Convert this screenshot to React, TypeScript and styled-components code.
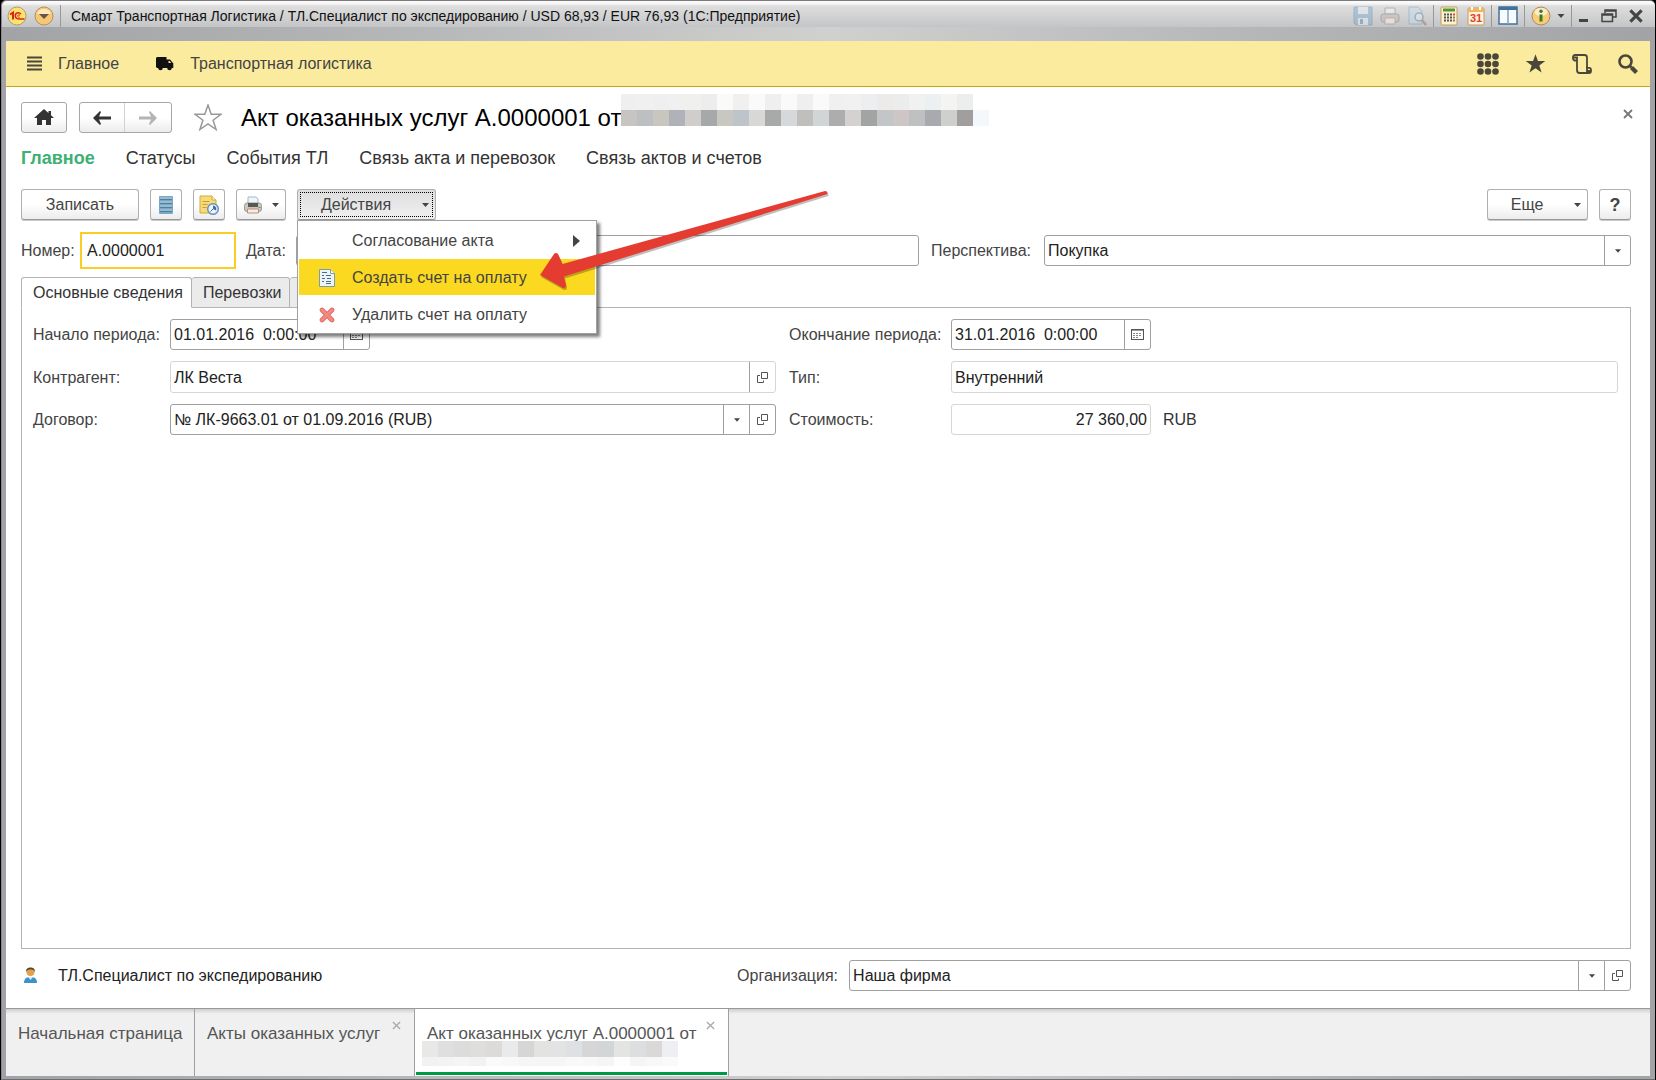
import React from "react";
import styled, { createGlobalStyle, css } from "styled-components";

const GlobalStyle = createGlobalStyle`
  *, *::before, *::after { box-sizing: border-box; }
  body {
    margin: 0;
    background: #000;
    font-family: "Liberation Sans", Arial, sans-serif;
    font-size: 16px;
    line-height: 20px;
    color: #444;
  }
  button, input, select { font: inherit; color: inherit; margin: 0; }
  svg { display: block; flex: none; }
`;

/* ---------- window frame ---------- */

const Frame = styled.div`
  min-height: 100vh;
  display: flex;
  flex-direction: column;
  margin: 0 1px;
  padding: 0 5px 3px 4px;
  border-top: 1px solid #7d797c;
  border-bottom: 1px solid #6e6e70;
  border-left: 1px solid #8a8a8e;
  border-radius: 5px 5px 0 0;
  background: linear-gradient(90deg, #a2a3a6, #b6b7b9 25%, #d0d0d0 50%, #b6b7b9 75%, #a2a3a6);
`;

const TitleBar = styled.header`
  display: flex;
  align-items: center;
  height: 26px;
  margin: 0 -5px 14px -4px;
  padding: 3px 12px 0 5px;
  border-radius: 5px 5px 0 0;
  background: linear-gradient(180deg, #fdfdfd 0, #f4f4f4 3px, #dedede 5px, #c4c5c7 100%);
`;

const Caption = styled.h1`
  flex: 1;
  min-width: 0;
  margin: 0;
  padding-left: 4px;
  overflow: hidden;
  white-space: nowrap;
  font-size: 14px;
  line-height: 20px;
  font-weight: 400;
  color: #111;
`;

const BarButton = styled.button<{ $dim?: boolean }>`
  display: flex;
  flex: none;
  padding: 0;
  border: 0;
  background: none;
  opacity: ${(p) => (p.$dim ? 0.4 : 1)};
`;

const BarGroup = styled.div<{ $gap: number }>`
  display: flex;
  align-items: center;
  gap: ${(p) => p.$gap}px;
`;

const BarSeparator = styled.span`
  width: 1px;
  height: 22px;
  margin: 0 6px;
  background: #98989a;
`;

/* ---------- section bar ---------- */

const SectionBar = styled.nav`
  display: flex;
  align-items: center;
  justify-content: space-between;
  height: 46px;
  padding: 0 12px 0 21px;
  border-bottom: 1px solid #bfa71c;
  background: #fbeb9e;
`;

const Sections = styled.div`
  display: flex;
  gap: 37px;
`;

const SectionLink = styled.a`
  display: flex;
  align-items: center;
  gap: 16px;
  color: #444;
  text-decoration: none;
`;

/* ---------- form page ---------- */

const Page = styled.main`
  flex: 1;
  display: flex;
  flex-direction: column;
  padding: 15px 19px 17px 15px;
  background: #fff;
`;

const HeadRow = styled.div`
  display: flex;
  align-items: center;
  height: 31px;
  margin-right: -2px;
`;

const buttonLook = css`
  border: 1px solid #b0b0b0;
  border-bottom-color: #989898;
  border-radius: 3px;
  background: linear-gradient(180deg, #fff 50%, #ececec);
  box-shadow: 0 1px 0 #c8c8c8;
`;

const NavGroup = styled.div<{ $before: number }>`
  display: flex;
  height: 31px;
  margin-left: ${(p) => p.$before}px;
  overflow: hidden;
  ${buttonLook}
  border-color: #a6a6a6;
  box-shadow: none;
`;

const NavButton = styled.button`
  display: flex;
  align-items: center;
  justify-content: center;
  width: 44px;
  padding: 0;
  border: 0;
  background: none;
  & + & { width: 47px; border-left: 1px solid #d2d2d2; }
`;

const StarButton = styled(BarButton)`
  margin: 0 19px 0 22px;
`;

const Title = styled.h2`
  margin: 0;
  white-space: nowrap;
  font-size: 24px;
  line-height: 29px;
  font-weight: 400;
  color: #000;
`;

const TitleMask = styled.svg`
  align-self: flex-start;
  margin: -8px auto 0 0;
`;

const CloseButton = styled(BarButton)`
  align-self: flex-start;
  padding: 7px 0 0;
`;

const FormLinks = styled.nav`
  display: flex;
  gap: 31px;
  height: 20px;
  margin-top: 15px;
`;

const FormLink = styled.a<{ $current?: boolean }>`
  font-size: 18px;
  line-height: 20px;
  text-decoration: none;
  font-weight: ${(p) => (p.$current ? 700 : 400)};
  color: ${(p) => (p.$current ? "#3db073" : "#333")};
`;

const Toolbar = styled.div`
  display: flex;
  gap: 11px;
  height: 31px;
  margin-top: 21px;
`;

const Spacer = styled.span`
  flex: 1;
`;

const ToolButton = styled.button<{ $width: number; $open?: boolean }>`
  display: flex;
  align-items: center;
  justify-content: center;
  width: ${(p) => p.$width}px;
  height: 31px;
  padding: 0 6px;
  color: #444;
  ${buttonLook}
  ${(p) =>
    p.$open &&
    css`
      background: linear-gradient(180deg, #dedede, #f0f0f0);
      outline: 1px dotted #000;
      outline-offset: -4px;
    `}
`;

const ToolLabel = styled.span`
  flex: 1;
  padding-right: 14px;
  text-align: center;
`;

const HelpMark = styled.span`
  font-size: 18px;
  font-weight: 700;
`;

/* ---------- actions menu ---------- */

const MenuAnchor = styled.div`
  position: relative;
`;

const Menu = styled.div`
  position: absolute;
  z-index: 2;
  top: 31px;
  left: 0;
  display: grid;
  gap: 1px;
  width: 300px;
  padding: 1px;
  border: 1px solid #a0a0a0;
  background: #fff;
  box-shadow: 3px 3px 3px rgba(0, 0, 0, 0.5);
`;

const MenuItem = styled.button<{ $active?: boolean }>`
  display: grid;
  grid-template-columns: 17px 1fr 8px;
  gap: 16px;
  align-items: center;
  height: 36px;
  padding: 2px 14px 0 20px;
  border: 0;
  text-align: left;
  color: #444;
  background: ${(p) => (p.$active ? "#fbd920" : "none")};
`;

const Pointer = styled.svg`
  position: absolute;
  z-index: 3;
  top: -3px;
  left: 238px;
  pointer-events: none;
`;

/* ---------- fields ---------- */

const FieldBox = styled.div<{ $quiet?: boolean; $tall?: boolean; $width?: number }>`
  display: flex;
  flex: ${(p) => (p.$width ? `0 0 ${p.$width}px` : "1")};
  min-width: 0;
  height: ${(p) => (p.$tall ? 32 : 31)}px;
  border: 1px solid ${(p) => (p.$quiet ? "#d6d6d6" : "#a0a0a0")};
  border-radius: 3px;
  background: #fff;
  color: #222;
`;

const Input = styled.input<{ $right?: boolean }>`
  flex: 1;
  width: 0;
  min-width: 0;
  padding: 1px 3px 0;
  border: 0;
  outline: 0;
  background: none;
  text-align: ${(p) => (p.$right ? "right" : "left")};
`;

const NumberInput = styled(Input)`
  flex: none;
  width: 156px;
  height: 37px;
  padding: 0 5px;
  border: 2px solid #fbcc24;
  color: #222;
`;

const PickerWrap = styled.div`
  flex: 1;
  min-width: 0;
  display: grid;
  grid-template-columns: 1fr 26px;
`;

const Select = styled.select`
  grid-area: 1 / 1 / 2 / 3;
  width: 100%;
  padding: 1px 30px 0 3px;
  border: 0;
  outline: 0;
  appearance: none;
  background: none;
`;

const SelectArrow = styled.span`
  grid-area: 1 / 2;
  display: flex;
  align-items: center;
  justify-content: center;
  border-left: 1px solid #a0a0a0;
  pointer-events: none;
`;

const FieldButton = styled.button`
  display: flex;
  align-items: center;
  justify-content: center;
  width: 26px;
  padding: 0;
  border: 0;
  border-left: 1px solid #a0a0a0;
  background: none;
`;

const NumberRow = styled.div`
  display: flex;
  align-items: center;
  height: 37px;
  margin-top: 12px;
`;

const Label = styled.label<{ $width: number }>`
  flex: none;
  width: ${(p) => p.$width}px;
  padding-top: 1px;
  white-space: nowrap;
`;

const Pair = styled.div<{ $grow: number; $before?: number }>`
  display: flex;
  align-items: center;
  flex: ${(p) => p.$grow} 1 0;
  margin-left: ${(p) => p.$before || 0}px;
`;

/* ---------- tabs ---------- */

const Tabs = styled.div`
  display: flex;
  margin-top: 8px;
`;

const Tab = styled.button<{ $current?: boolean }>`
  height: 31px;
  padding: 0 8px 0 11px;
  margin: 0 0 -1px;
  border: 1px solid #b4b4b4;
  border-left-width: ${(p) => (p.$current ? 1 : 0)}px;
  border-bottom-color: ${(p) => (p.$current ? "#fff" : "#b4b4b4")};
  border-radius: 3px 3px 0 0;
  background: ${(p) => (p.$current ? "#fff" : "#ebebeb")};
  color: #333;
  z-index: 1;
`;

const Panel = styled.section`
  flex: 1;
  display: grid;
  grid-template-columns: 743fr 829fr;
  align-content: start;
  gap: 11px 13px;
  padding: 11px 12px 11px 11px;
  border: 1px solid #b4b4b4;
`;

const Cell = styled.div`
  display: flex;
  align-items: center;
  min-width: 0;
`;

const Unit = styled.span`
  margin-left: 12px;
  padding-top: 1px;
  color: #333;
`;

const Footer = styled.footer`
  display: flex;
  align-items: center;
  margin-top: 11px;
`;

const User = styled.div`
  display: flex;
  align-items: center;
  gap: 20px;
  flex: 715 1 0;
  padding-left: 2px;
  color: #222;
`;

/* ---------- open windows bar ---------- */

const WindowBar = styled.nav`
  display: flex;
  height: 68px;
  border-top: 1px solid #989898;
  background: linear-gradient(180deg, #cfcfcf, #f0f0f0 5px);
`;

const WindowTab = styled.div<{ $current?: boolean; $width: number }>`
  display: flex;
  align-items: flex-start;
  justify-content: space-between;
  width: ${(p) => p.$width}px;
  padding: 15px 13px 0 12px;
  border-right: 1px solid #a0a0a0;
  ${(p) =>
    p.$current &&
    css`
      background: linear-gradient(#009a44, #009a44) 1px calc(100% - 1px) / calc(100% - 2px) 3px no-repeat #fff;
    `}
`;

const WindowLink = styled.a`
  white-space: nowrap;
  font-size: 17px;
  line-height: 20px;
  text-decoration: none;
  color: #555;
`;

const TabMask = styled.svg`
  margin: -3px 0 0 -5px;
`;

const TabClose = styled(BarButton)`
  margin-top: -3px;
`;

/* ---------- icons ---------- */

const Caret = ({ w = 7, h = 4 }: { w?: number; h?: number }) => (
  <svg width={w} height={h} viewBox="0 0 7 4" aria-hidden="true">
    <path d="M0 0h7L3.5 4z" fill="#444" />
  </svg>
);

const Cross = ({ size, color, stroke = 2 }: { size: number; color: string; stroke?: number }) => (
  <svg width={size} height={size} viewBox="0 0 10 10" aria-hidden="true">
    <path d="M1 1l8 8M9 1L1 9" stroke={color} strokeWidth={stroke} />
  </svg>
);

const OpenIcon = () => (
  <svg width="11" height="11" viewBox="0 0 11 11" fill="none" stroke="#555" aria-hidden="true">
    <path d="M4.5.5h6v6h-6zM3 3.500H.5v7h6V8.500" />
  </svg>
);

const CalendarIcon = () => (
  <svg width="13" height="11" viewBox="0 0 13 11" aria-hidden="true">
    <rect x=".5" y=".5" width="12" height="10" fill="#fff" stroke="#555" />
    <path d="M1 1.500h11" stroke="#999" />
    <path d="M2 4.500h9M2 6.500h9M2 8.500h6" stroke="#888" strokeDasharray="2 1" />
  </svg>
);

const HomeIcon = () => (
  <svg width="20" height="17" viewBox="0 0 20 17" aria-hidden="true">
    <path d="M10 0L0 9h3v7h5v-5h4v5h5V9h3l-3-2.700V2h-2.500v2z" fill="#333" />
  </svg>
);

const ArrowIcon = ({ color, flip }: { color: string; flip?: boolean }) => (
  <svg width="18" height="14" viewBox="0 0 18 14" aria-hidden="true">
    <path
      d="M0 7l7-7 1 1-2 4.500h12v3H6L8 13l-1 1z"
      fill={color}
      transform={flip ? "matrix(-1 0 0 1 18 0)" : undefined}
    />
  </svg>
);

const starPath = "M14 1l3.200 9.300H27l-7.900 5.900 3 9.300L14 19.800l-8.100 5.700 3-9.300L1 10.300h9.800z";

const ListIcon = () => (
  <svg width="14" height="20" viewBox="0 0 14 20" aria-hidden="true">
    <rect width="14" height="18" y="1" rx="1" fill="#7ba6c4" />
    <path d="M1 4.500h12M1 8.500h12M1 12.500h12M1 16.500h12" stroke="#4d7f9f" />
    <path d="M1 3h12M1 7h12M1 11h12M1 15h12" stroke="#b3d0e2" />
  </svg>
);

const JournalIcon = () => (
  <svg width="20" height="20" viewBox="0 0 20 20" aria-hidden="true">
    <path d="M1 1h12l4 4v13H1z" fill="#f7da79" stroke="#d3a93c" />
    <path d="M13 1v4h4" fill="#fff2bd" stroke="#d3a93c" />
    <path d="M3.500 6.500h7M3.500 9.500h5M3.500 12.500h4" stroke="#c69c3a" />
    <circle cx="14" cy="14" r="5.300" fill="#eef5fc" stroke="#6991bd" strokeWidth="1.500" />
    <path d="M14 14v-3.500a3.500 3.500 0 0 1 3 5z" fill="#3c6da8" />
    <path d="M14 14l-2.500 2.500" stroke="#3c6da8" />
  </svg>
);

const PrinterIcon = () => (
  <svg width="20" height="20" viewBox="0 0 20 20" aria-hidden="true">
    <path d="M5 2h8l2 2v6H5z" fill="#eef6fb" stroke="#9db8c9" />
    <rect x="1.500" y="8" width="17" height="8.500" rx="2.500" fill="#cdc7c2" stroke="#a09893" />
    <path d="M5 8h10v4H5z" fill="#5b5753" />
    <path d="M4.500 14h11v4h-11z" fill="#f7ebe4" stroke="#b9917d" />
    <path d="M15.500 12.500h2" stroke="#4c9b4c" />
  </svg>
);

const InvoiceIcon = () => (
  <svg width="16" height="18" viewBox="0 0 16 18" aria-hidden="true">
    <path d="M.5.5h11l4 4v13H.5z" fill="#edf4f8" stroke="#7d9bab" />
    <path d="M11.500.5v4h4" fill="#fff" stroke="#7d9bab" />
    <path d="M3 3.500h5M3 6.500h2M7 6.500h5M3 9.500h3M8 9.500h4M3 12.500h2M7 12.500h5M7 14.500h5" stroke="#456f8b" />
  </svg>
);

const DeleteIcon = () => (
  <svg width="16" height="16" viewBox="0 0 16 16" aria-hidden="true">
    <path d="M3 3l10 10M13 3L3 13" stroke="#e0675e" strokeWidth="4.600" strokeLinecap="round" />
    <path d="M3 3l10 10M13 3L3 13" stroke="#f28a80" strokeWidth="3" strokeLinecap="round" />
  </svg>
);

const UserIcon = () => (
  <svg width="15" height="17" viewBox="0 0 15 17" aria-hidden="true">
    <path d="M1 16c0-4 2-6 6.500-6s6.500 2 6.500 6z" fill="#3b93c9" />
    <path d="M5 10l2.500 3L10 10z" fill="#d8edf8" />
    <circle cx="7.500" cy="5" r="4" fill="#e5a04d" />
    <path d="M3 5C3 1.500 5 .5 7.500.5S12 1.500 12 5c-1-2-2.500-2.500-4.500-2.500S4 3 3 5z" fill="#5a4630" />
  </svg>
);

const LogoIcon = () => (
  <svg width="20" height="20" viewBox="0 0 20 20" aria-hidden="true">
    <circle cx="10" cy="10" r="9" fill="#fbe36c" stroke="#b39c72" />
    <path d="M3 8.500l3-2V13.500" fill="none" stroke="#d8261c" strokeWidth="2" />
    <path d="M14 8c-2.500-2.500-6-1-5.700 2s2.700 3 4.200 3H17.500" fill="none" stroke="#d8261c" strokeWidth="1.600" />
    <path d="M13 9.200c-1.600-.8-2.500 0-2.300 1s1.300 1.100 2 1.100" fill="none" stroke="#d8261c" />
  </svg>
);

const MenuRoundIcon = () => (
  <svg width="20" height="20" viewBox="0 0 20 20" aria-hidden="true">
    <circle cx="10" cy="10" r="9" fill="#f7c873" stroke="#b78f5d" />
    <path d="M3 8a7 5 0 0 1 14 0z" fill="#fde7bd" />
    <path d="M5 8h10l-5 5z" fill="#665544" />
  </svg>
);

const SaveIcon = () => (
  <svg width="20" height="20" viewBox="0 0 20 20" aria-hidden="true">
    <path d="M1 1h18v18H3l-2-2z" fill="#6fa3cb" stroke="#4a80a8" />
    <path d="M5 1h10v7H5zM5 12h10v7H5z" fill="#eef5fa" />
    <path d="M7 13h3v5H7z" fill="#4a80a8" />
  </svg>
);

const BarPrinterIcon = () => (
  <svg width="20" height="20" viewBox="0 0 20 20" aria-hidden="true">
    <path d="M5 2h10v6H5z" fill="#fff" stroke="#777" />
    <rect x="1" y="8" width="18" height="8" rx="2" fill="#bcb4ae" stroke="#776f6c" />
    <path d="M5 12h10v6H5z" fill="#fff" stroke="#c07858" />
  </svg>
);

const PreviewIcon = () => (
  <svg width="20" height="20" viewBox="0 0 20 20" aria-hidden="true">
    <path d="M2 1h9l4 4v13H2z" fill="#c4dcec" stroke="#6795b4" />
    <circle cx="12" cy="11" r="4" fill="#e6f2fa" stroke="#4a7898" strokeWidth="1.500" />
    <path d="M15 14l4 5" stroke="#a05a38" strokeWidth="2.500" />
  </svg>
);

const CalculatorIcon = () => (
  <svg width="18" height="20" viewBox="0 0 18 20" aria-hidden="true">
    <rect x="1" y="1" width="16" height="18" rx="1" fill="#fff1d0" stroke="#c39c5e" />
    <path d="M3 2.500h12v3H3z" fill="#4f9932" />
    <path d="M4 8.500h8M4 11.500h8M4 14.500h8" stroke="#555" strokeWidth="2" strokeDasharray="2 1" />
    <path d="M13 7.500h2v2h-2z" fill="#e24a30" />
    <path d="M13 10.500h2v2h-2zM13 13.500h2v2h-2z" fill="#8c7c5c" />
  </svg>
);

const DateIcon = () => (
  <svg width="18" height="20" viewBox="0 0 18 20" aria-hidden="true">
    <rect x="1" y="2" width="16" height="17" rx="1" fill="#fff3df" stroke="#c39c5e" />
    <path d="M1 2h16v4H1z" fill="#f0b562" />
    <path d="M5 1v3M13 1v3" stroke="#fff" strokeWidth="2" />
    <text x="9" y="16" textAnchor="middle" fontSize="11" fontWeight="700" fill="#e0402a">31</text>
  </svg>
);

const ColumnsIcon = () => (
  <svg width="20" height="20" viewBox="0 0 20 20" aria-hidden="true">
    <rect x="1" y="1" width="18" height="17" fill="#f8fbfd" stroke="#41729c" strokeWidth="1.500" />
    <path d="M1 2.500h18" stroke="#41729c" strokeWidth="3" />
    <path d="M10 4v14" stroke="#7fa2bf" strokeWidth="1.500" />
  </svg>
);

const InfoIcon = () => (
  <svg width="20" height="20" viewBox="0 0 20 20" aria-hidden="true">
    <circle cx="10" cy="10" r="9" fill="#f9cc7a" stroke="#a98b62" />
    <ellipse cx="10" cy="6" rx="6.500" ry="4" fill="#fdebca" />
    <path d="M10 8.500V15.500" fill="none" stroke="#367f1f" strokeWidth="3" />
    <circle cx="10" cy="5.300" r="1.700" fill="#367f1f" />
  </svg>
);

const RestoreIcon = () => (
  <svg width="16" height="14" viewBox="0 0 16 14" fill="none" stroke="#444" strokeWidth="1.500" aria-hidden="true">
    <path d="M4 4V1h11v7h-3M4 2h11" />
    <path d="M1 5h10.500v7.500H1zM1 6h10.500" />
  </svg>
);

const MinimizeIcon = () => (
  <svg width="11" height="14" viewBox="0 0 11 14" aria-hidden="true">
    <path d="M1 10h9v3H1z" fill="#444" />
  </svg>
);

const LinesIcon = () => (
  <svg width="15" height="15" viewBox="0 0 15 15" aria-hidden="true">
    <path d="M0 1.500h15M0 5.500h15M0 9.500h15M0 13.500h15" stroke="#4a463c" strokeWidth="2" />
  </svg>
);

const TruckIcon = () => (
  <svg width="18" height="14" viewBox="0 0 18 14" aria-hidden="true">
    <path d="M1 0h9.500v11H1L0 10V1z" fill="#111" />
    <path d="M10 2.500h4l2.500 3 .8 1V11H10z" fill="#111" />
    <path d="M12.500 4h1.200l1.500 2h-2.700z" fill="#fbeb9e" />
    <circle cx="4.500" cy="11" r="2.300" fill="#111" />
    <circle cx="13.500" cy="11" r="2.300" fill="#111" />
  </svg>
);

const AppsIcon = () => (
  <svg width="22" height="22" viewBox="0 0 22 22" fill="#4a463c" aria-hidden="true">
    {[3.500, 11, 18.500].map((y) => [3.500, 11, 18.500].map((x) => <circle key={`${x}-${y}`} cx={x} cy={y} r="3.300" />))}
  </svg>
);

const HistoryIcon = () => (
  <svg width="20" height="20" viewBox="0 0 20 20" fill="none" stroke="#4a463c" strokeWidth="1.800" aria-hidden="true">
    <path d="M5 6.500H3A2 2 0 0 1 1 4.500V3a2 2 0 0 1 2-2h9.500c1.500 0 2.500 1 2.500 2.500V14" />
    <path d="M1.500 3.500H5V16c0 2 1 3 2.500 3H17a2 2 0 0 0 2-2v-1.200a2 2 0 0 0-2-2h-2v3.200h3.500" />
  </svg>
);

const SearchIcon = () => (
  <svg width="20" height="20" viewBox="0 0 20 20" fill="none" stroke="#4a463c" aria-hidden="true">
    <circle cx="7.500" cy="7.500" r="6" strokeWidth="2.600" />
    <path d="M11.500 11.500l2 2" strokeWidth="2.500" />
    <path d="M13.500 13.500l5 5" strokeWidth="4.200" />
  </svg>
);

/* ---------- hidden-text mosaics ---------- */

const titleRows = [
  "#efefef #f0f0f0 #efefef #f0f0f1 #f0f0ee #ededee #fafaf8 #f0f0f1 #fafafa #efeff0 #fafafa #efefef #fafafa #f0f0f0 #f1f1f1 #edeef0 #edebea #ebecec #f1f1f1 #edf0f0 #f4f4f2 #eceeee".split(" "),
  "#c7c5c3 #bebfc2 #c9c5bf #b0b1b9 #cfcecc #a7a8aa #c9c7c2 #bfc3ca #d8d8d6 #a8a9a9 #d7d8da #c1bfbd #d1d5d6 #adadae #d3d2d0 #a2a4a4 #c3c6c6 #cdc5c6 #bfc0c2 #a9aab0 #cfcfcd #a39e9e #f4f7fb".split(" "),
];

const tabRows = [
  "#e8e8e6 #dfdfdf #dcdcdc #dededc #dddbd9 #e8eaec #d6d6d6 #e3e3e1 #e3e3e3 #dee0e3 #d6d6d6 #d3d6d6 #e4e4e2 #dcdee0 #dbd9d8 #eeeff2".split(" "),
  "#f2f2f2 #f3f3f3 #f5f5f5 #f2f2f2 #fafafa #f8f8f8 #f6f6f6 #f6f6f6 #f6f6f6 #f9f9f9 #f8f8f8 #f5f5f5 #fdfdfd #f3f6f5 #f8f8f8 #fafafb".split(" "),
];

const mosaic = (rows: string[][]) =>
  rows.map((row, y) =>
    row.map((fill, x) => <rect key={`${x}-${y}`} x={x * 16} y={y * 16} width="16" height="16" fill={fill} />)
  );

/* ---------- composed fields ---------- */

type PickerProps = { id: string; value: string; open?: boolean };

const Picker = ({ id, value, open }: PickerProps) => (
  <FieldBox>
    <PickerWrap>
      <Select id={id} defaultValue={value}>
        <option>{value}</option>
      </Select>
      <SelectArrow>
        <Caret w={6} h={4} />
      </SelectArrow>
    </PickerWrap>
    {open && (
      <FieldButton type="button" aria-label="Открыть">
        <OpenIcon />
      </FieldButton>
    )}
  </FieldBox>
);

const DateField = ({ id, value }: { id: string; value: string }) => (
  <FieldBox $width={200}>
    <Input id={id} defaultValue={value} />
    <FieldButton type="button" aria-label="Выбрать дату">
      <CalendarIcon />
    </FieldButton>
  </FieldBox>
);

export default function App() {
  return (
    <>
      <GlobalStyle />
      <Frame>
        <TitleBar>
          <BarGroup $gap={7}>
            <BarButton aria-label="1С"><LogoIcon /></BarButton>
            <BarButton aria-label="Главное меню"><MenuRoundIcon /></BarButton>
          </BarGroup>
          <BarSeparator />
          <Caption>
            Смарт Транспортная Логистика / ТЛ.Специалист по экспедированию / USD 68,93 / EUR 76,93 (1С:Предприятие)
          </Caption>
          <BarGroup $gap={7}>
            <BarButton $dim aria-label="Сохранить"><SaveIcon /></BarButton>
            <BarButton $dim aria-label="Печать"><BarPrinterIcon /></BarButton>
            <BarButton $dim aria-label="Просмотр"><PreviewIcon /></BarButton>
          </BarGroup>
          <BarSeparator />
          <BarGroup $gap={9}>
            <BarButton aria-label="Калькулятор"><CalculatorIcon /></BarButton>
            <BarButton aria-label="Календарь"><DateIcon /></BarButton>
          </BarGroup>
          <BarSeparator />
          <BarButton aria-label="Панели"><ColumnsIcon /></BarButton>
          <BarSeparator />
          <BarGroup $gap={6}>
            <BarButton aria-label="Информация"><InfoIcon /></BarButton>
            <BarButton aria-label="Ещё команды"><Caret w={8} h={4} /></BarButton>
          </BarGroup>
          <BarSeparator />
          <BarGroup $gap={12}>
            <BarButton aria-label="Свернуть"><MinimizeIcon /></BarButton>
            <BarButton aria-label="Восстановить"><RestoreIcon /></BarButton>
            <BarButton aria-label="Закрыть окно"><Cross size={14} color="#444" stroke={2.2} /></BarButton>
          </BarGroup>
        </TitleBar>

        <SectionBar>
          <Sections>
            <SectionLink href="#main"><LinesIcon />Главное</SectionLink>
            <SectionLink href="#logistics"><TruckIcon />Транспортная логистика</SectionLink>
          </Sections>
          <BarGroup $gap={26}>
            <BarButton aria-label="Все функции"><AppsIcon /></BarButton>
            <BarButton aria-label="Избранное">
              <svg width="21" height="21" viewBox="0 0 28 27" aria-hidden="true"><path d={starPath} fill="#4a463c" /></svg>
            </BarButton>
            <BarButton aria-label="История"><HistoryIcon /></BarButton>
            <BarButton aria-label="Поиск"><SearchIcon /></BarButton>
          </BarGroup>
        </SectionBar>

        <Page>
          <HeadRow>
            <NavGroup $before={0}>
              <NavButton type="button" aria-label="Домой"><HomeIcon /></NavButton>
            </NavGroup>
            <NavGroup $before={12}>
              <NavButton type="button" aria-label="Назад"><ArrowIcon color="#333" /></NavButton>
              <NavButton type="button" aria-label="Вперед"><ArrowIcon color="#b4b4b4" flip /></NavButton>
            </NavGroup>
            <StarButton type="button" aria-label="В избранное">
              <svg width="28" height="27" viewBox="0 0 28 27" aria-hidden="true">
                <path d={starPath} fill="#fff" stroke="#999" strokeWidth="1.500" />
              </svg>
            </StarButton>
            <Title>Акт оказанных услуг А.0000001 от</Title>
            <TitleMask width="368" height="32" viewBox="0 0 368 32" aria-hidden="true">{mosaic(titleRows)}</TitleMask>
            <CloseButton type="button" aria-label="Закрыть"><Cross size={10} color="#777" stroke={1.8} /></CloseButton>
          </HeadRow>

          <FormLinks>
            <FormLink href="#general" $current>Главное</FormLink>
            <FormLink href="#statuses">Статусы</FormLink>
            <FormLink href="#events">События ТЛ</FormLink>
            <FormLink href="#shipments">Связь акта и перевозок</FormLink>
            <FormLink href="#invoices">Связь актов и счетов</FormLink>
          </FormLinks>

          <Toolbar>
            <ToolButton type="button" $width={118}>Записать</ToolButton>
            <ToolButton type="button" $width={32} aria-label="Список"><ListIcon /></ToolButton>
            <ToolButton type="button" $width={32} aria-label="Журнал"><JournalIcon /></ToolButton>
            <ToolButton type="button" $width={50} aria-label="Печать">
              <PrinterIcon />
              <Spacer />
              <Caret />
            </ToolButton>
            <MenuAnchor>
              <ToolButton type="button" $width={139} $open aria-haspopup="menu" aria-expanded="true">
                <ToolLabel>Действия</ToolLabel>
                <Caret />
              </ToolButton>
              <Menu role="menu">
                <MenuItem role="menuitem">
                  <span />
                  Согласование акта
                  <svg width="7" height="12" viewBox="0 0 7 12" aria-hidden="true"><path d="M0 0l7 6-7 6z" fill="#444" /></svg>
                </MenuItem>
                <MenuItem role="menuitem" $active><InvoiceIcon />Создать счет на оплату</MenuItem>
                <MenuItem role="menuitem"><DeleteIcon />Удалить счет на оплату</MenuItem>
              </Menu>
              <Pointer width="300" height="112" viewBox="535 186 300 112" aria-hidden="true">
                <path
                  d="M540 275L554 254q2-2 4 0l4.500 10L825 191q3 0 2.500 3L564 276.500l2 9q0 3-3 2.500z"
                  fill="#000"
                  opacity=".25"
                  transform="translate(1 2)"
                />
                <path d="M540 275L554 254q2-2 4 0l4.500 10L825 191q3 0 2.500 3L564 276.500l2 9q0 3-3 2.500z" fill="#e53c31" />
              </Pointer>
            </MenuAnchor>
            <Spacer />
            <ToolButton type="button" $width={101} aria-haspopup="menu">
              <ToolLabel>Еще</ToolLabel>
              <Caret />
            </ToolButton>
            <ToolButton type="button" $width={32} aria-label="Справка"><HelpMark>?</HelpMark></ToolButton>
          </Toolbar>

          <NumberRow>
            <Label $width={59} htmlFor="number">Номер:</Label>
            <NumberInput id="number" defaultValue="А.0000001" />
            <Pair $grow={673} $before={10}>
              <Label $width={50} htmlFor="date">Дата:</Label>
              <FieldBox><Input id="date" /></FieldBox>
            </Pair>
            <Pair $grow={700} $before={12}>
              <Label $width={113} htmlFor="perspective">Перспектива:</Label>
              <Picker id="perspective" value="Покупка" />
            </Pair>
          </NumberRow>

          <Tabs role="tablist">
            <Tab type="button" role="tab" aria-selected="true" $current>Основные сведения</Tab>
            <Tab type="button" role="tab">Перевозки</Tab>
            <Tab type="button" role="tab" aria-label="Дополнительно" />
          </Tabs>
          <Panel>
            <Cell>
              <Label $width={137} htmlFor="start">Начало периода:</Label>
              <DateField id="start" value="01.01.2016  0:00:00" />
            </Cell>
            <Cell>
              <Label $width={162} htmlFor="end">Окончание периода:</Label>
              <DateField id="end" value="31.01.2016  0:00:00" />
            </Cell>
            <Cell>
              <Label $width={137} htmlFor="partner">Контрагент:</Label>
              <FieldBox $quiet $tall>
                <Input id="partner" defaultValue="ЛК Веста" readOnly />
                <FieldButton type="button" aria-label="Открыть"><OpenIcon /></FieldButton>
              </FieldBox>
            </Cell>
            <Cell>
              <Label $width={162} htmlFor="kind">Тип:</Label>
              <FieldBox $quiet $tall><Input id="kind" defaultValue="Внутренний" readOnly /></FieldBox>
            </Cell>
            <Cell>
              <Label $width={137} htmlFor="contract">Договор:</Label>
              <Picker id="contract" value="№ ЛК-9663.01 от 01.09.2016 (RUB)" open />
            </Cell>
            <Cell>
              <Label $width={162} htmlFor="cost">Стоимость:</Label>
              <FieldBox $quiet $width={200}><Input id="cost" defaultValue="27 360,00" readOnly $right /></FieldBox>
              <Unit>RUB</Unit>
            </Cell>
          </Panel>

          <Footer>
            <User><UserIcon />ТЛ.Специалист по экспедированию</User>
            <Pair $grow={895}>
              <Label $width={112} htmlFor="company">Организация:</Label>
              <Picker id="company" value="Наша фирма" open />
            </Pair>
          </Footer>
        </Page>

        <WindowBar>
          <WindowTab $width={189}><WindowLink href="#home">Начальная страница</WindowLink></WindowTab>
          <WindowTab $width={220}>
            <WindowLink href="#acts">Акты оказанных услуг</WindowLink>
            <TabClose type="button" aria-label="Закрыть вкладку"><Cross size={9} color="#aaa" stroke={1.5} /></TabClose>
          </WindowTab>
          <WindowTab $width={314} $current>
            <div>
              <WindowLink href="#act">Акт оказанных услуг А.0000001 от</WindowLink>
              <TabMask width="256" height="25" viewBox="0 0 256 25" aria-hidden="true">{mosaic(tabRows)}</TabMask>
            </div>
            <TabClose type="button" aria-label="Закрыть вкладку"><Cross size={9} color="#aaa" stroke={1.5} /></TabClose>
          </WindowTab>
        </WindowBar>
      </Frame>
    </>
  );
}
